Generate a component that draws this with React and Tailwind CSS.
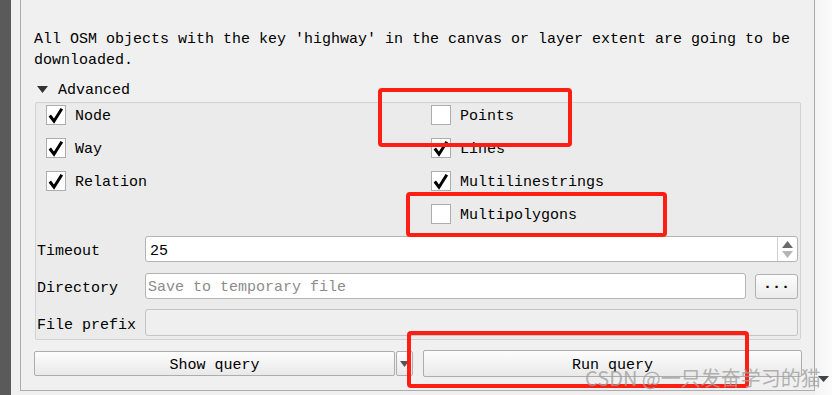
import React from "react";

const Box = ({ checked }) => (
  <span className="w-[20px] h-[20px] bg-white border border-[#adadad] flex items-center justify-center shrink-0">
    {checked && (
      <svg width="18" height="18" viewBox="0 0 18 18">
        <path d="M2.8 9.5 L7 15.2 L14.8 2.8" stroke="#000" strokeWidth="3" fill="none" strokeLinejoin="miter" />
      </svg>
    )}
  </span>
);

const Row = ({ checked, label }) => (
  <div className="h-[20px] flex items-center">
    <Box checked={checked} />
    <span className="ml-[9px] leading-[20px] pt-[4px]">{label}</span>
  </div>
);

export default function App() {
  return (
    <div className="w-[832px] h-[395px] flex bg-[#f0f0f0] overflow-hidden relative font-['Liberation_Mono',monospace] text-[15px] text-black">
      <div className="w-[11px] bg-[#5a5a5a] shrink-0" />
      <div className="w-[9px] shrink-0" />
      <div className="w-[795px] h-[391px] shrink-0 border-l border-b border-r border-[#acacac] flex flex-col pl-[13px] pr-[12px]">
        <p className="mt-[29px] leading-[21px]">
          All OSM objects with the key 'highway' in the canvas or layer extent are going to be downloaded.
        </p>
        <div className="mt-[7px] h-[21px] flex items-center pl-[3px]">
          <svg width="11" height="7" viewBox="0 0 11 7" className="mt-[2px]">
            <path d="M0 0 L11 0 L5.5 7 Z" fill="#333" />
          </svg>
          <span className="ml-[10px] pt-[4px] leading-[21px]">Advanced</span>
        </div>
        <div className="mt-[3px] ml-[1px] w-[766px] h-[238px] border border-[#d2d2d2] rounded-[2px] bg-[#ebebeb] flex flex-col">
          <div className="pt-[2px] pl-[10px] flex">
            <div className="w-[385px] flex flex-col gap-[13px]">
              <Row checked label="Node" />
              <Row checked label="Way" />
              <Row checked label="Relation" />
            </div>
            <div className="flex flex-col gap-[13px]">
              <Row label="Points" />
              <Row checked label="Lines" />
              <Row checked label="Multilinestrings" />
              <Row label="Multipolygons" />
            </div>
          </div>
          <div className="mt-[12px] pl-[1px] pr-[2px] flex flex-col">
            <div className="flex items-center h-[26px]">
              <span className="w-[108px] pt-[6px] leading-[20px]">Timeout</span>
              <div className="flex-1 h-[26px] bg-white border border-[#b4b4b4] rounded-[3px] flex items-center">
                <span className="pl-[4px] flex-1 pt-[5px] leading-[20px]">25</span>
                <div className="w-[20px] h-full border-l border-[#d0d0d0] flex flex-col items-center justify-center gap-[3px]">
                  <svg width="11" height="7" viewBox="0 0 11 7">
                    <path d="M0 7 L11 7 L5.5 0 Z" fill="#6b6b6b" />
                  </svg>
                  <svg width="11" height="7" viewBox="0 0 11 7">
                    <path d="M0 0 L11 0 L5.5 7 Z" fill="#b5b5b5" />
                  </svg>
                </div>
              </div>
            </div>
            <div className="mt-[11px] flex items-center h-[26px]">
              <span className="w-[108px] pt-[6px] leading-[20px]">Directory</span>
              <div className="flex-1 h-[26px] bg-white border border-[#b4b4b4] rounded-[3px] flex items-center">
                <span className="pl-[2px] text-[#8c8c8c] pt-[4px] leading-[20px]">Save to temporary file</span>
              </div>
              <div className="ml-[9px] w-[43px] h-[25px] border border-[#b0b0b0] rounded-[3px] bg-gradient-to-b from-[#fdfdfd] to-[#ebebeb] flex items-center justify-center font-bold leading-none pb-[4px]">
                ...
              </div>
            </div>
            <div className="mt-[10px] flex items-center h-[27px]">
              <span className="w-[108px] pt-[6px] leading-[20px]">File prefix</span>
              <div className="flex-1 h-[27px] bg-[#efefef] border border-[#c4c4c4] rounded-[3px]" />
            </div>
          </div>
        </div>
        <div className="mt-[10px] h-[27px] flex items-center">
          <div className="w-[361px] h-[25px] border border-[#adadad] rounded-[2px] bg-gradient-to-b from-[#fdfdfd] to-[#e9e9e9] flex items-center justify-center">
            <span className="pt-[5px] leading-[20px]">Show query</span>
          </div>
          <div className="ml-[1px] w-[17px] h-[25px] border border-[#adadad] rounded-[2px] bg-gradient-to-b from-[#fdfdfd] to-[#e9e9e9] flex items-center justify-center">
            <svg width="9" height="6" viewBox="0 0 9 6">
              <path d="M0 0 L9 0 L4.5 6 Z" fill="#555" />
            </svg>
          </div>
          <div className="ml-[10px] flex-1 h-[27px] border border-[#adadad] rounded-[2px] bg-gradient-to-b from-[#fdfdfd] to-[#e9e9e9] flex items-center justify-center">
            <span className="pt-[5px] leading-[20px]">Run query</span>
          </div>
        </div>
      </div>
      <div className="w-[17px] shrink-0 bg-gradient-to-r from-[#f4f4f4] to-[#fbfbfb] flex flex-col justify-end items-center pb-[13px]">
        <svg width="11" height="6" viewBox="0 0 11 6">
          <path d="M0 0 L11 0 L5.5 6 Z" fill="#444" />
        </svg>
      </div>

      <div className="absolute left-[378px] top-[88px] w-[194px] h-[59px] border-[4px] border-[#ff1e14] rounded-[4px]" />
      <div className="absolute left-[406px] top-[192px] w-[261px] h-[45px] border-[4px] border-[#ff1e14] rounded-[4px]" />
      <div className="absolute left-[407px] top-[331px] w-[342px] h-[57px] border-[4px] border-[#ff1e14] rounded-[4px]" />

      <div className="absolute left-[585px] top-[365px] text-[20px] leading-[26px] font-['Noto_Sans_CJK_SC',sans-serif] text-[#a0a0a0]/80 whitespace-nowrap">
        CSDN @一只发奋学习的猫
      </div>
    </div>
  );
}
